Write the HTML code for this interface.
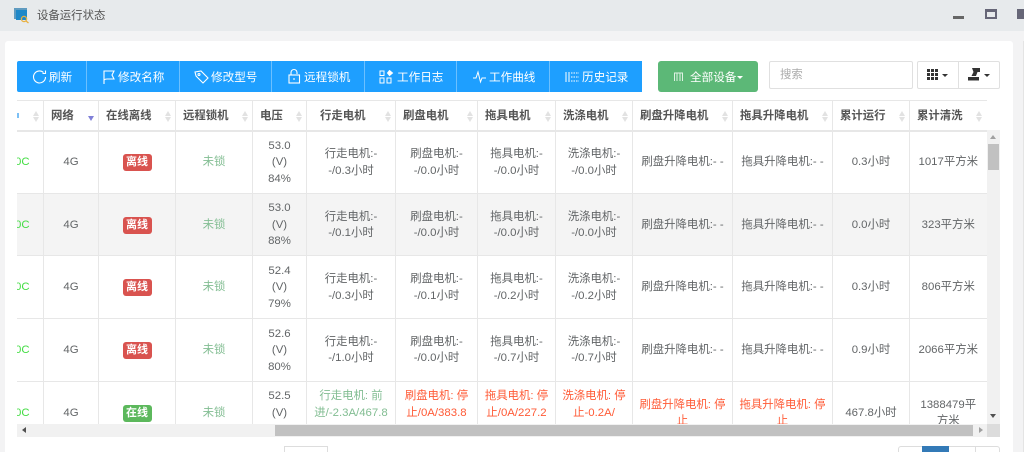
<!DOCTYPE html>
<html lang="zh"><head><meta charset="utf-8"><title>设备运行状态</title>
<style>
*{box-sizing:border-box}
html,body{margin:0;padding:0;width:1024px;height:452px;overflow:hidden}
body{background:#f3f3f4;font:11.4px/16.5px "Liberation Sans","Noto Sans CJK SC",sans-serif;color:#626567}
#root{position:absolute;left:0;top:0;width:1024px;height:452px;overflow:hidden;background:#f3f3f4;filter:blur(.3px)}
.a{position:absolute}
#top{left:0;top:0;width:1024px;height:31px;background:#e7eaec}
#panel{left:5px;top:41px;width:1008px;height:411px;background:#fff;border-radius:3px 3px 0 0}
#tb{left:17px;top:61px;width:625px;height:31px;background:#1e9fff;border-radius:2px 0 0 2px}
.sep{top:61px;width:1px;height:31px;background:#6cc0ff}
.tt{top:62px;line-height:31px;color:#fff;font-size:11.6px;white-space:nowrap}
.ic{position:absolute}
#wrap{left:17px;top:100px;width:970px;height:324px;overflow:hidden;background:#fff}
table{border-collapse:collapse;table-layout:fixed;width:970px}
th,td{border:1px solid #e7e7e7;padding:1px 0 0;text-align:center;overflow:hidden;vertical-align:middle;font-weight:400}
th{height:30px;border-bottom:2px solid #e7e7e7;text-align:left;padding-left:7px;font-weight:700;color:#555;white-space:nowrap;position:relative}
th:after{content:"";position:absolute;right:4.500px;top:10px;width:0;height:0;border:3.500px solid transparent;border-bottom:5px solid #e2e2e2;border-top:0}
th:before{content:"";position:absolute;right:4.500px;top:16px;width:0;height:0;border:3.500px solid transparent;border-top:5px solid #e2e2e2;border-bottom:0}
th.s:before{border-top-color:#8080d8;top:15px}
th.s:after{display:none}
td{height:62.7px}
tr.g td{background:#f4f4f4}
td:first-child{border-left:0;text-align:left;color:#44dd44;white-space:nowrap}
td:first-child span{margin-left:-2px}
th:first-child{border-left:0;padding-left:0}
.b{display:inline-block;width:29px;height:17px;line-height:17px;border-radius:3px;color:#fff;font-size:11px;font-weight:700;background:#d9534f;vertical-align:middle}
.on{background:#5cb85c}
.l{color:#82bd92}
.r{color:#ff5a36}
.btn{border:1px solid #e0e0e0;background:#fff}
.car{position:absolute;width:0;height:0;border:3px solid transparent;border-top:3px solid #333;border-bottom:0}
</style></head><body>
<div id="root">
<div class="a" id="top"></div>
<svg class="a" style="left:13px;top:7px" width="18" height="17" viewBox="0 0 18 17"><rect x="1" y="1" width="13" height="11" fill="#5f9bc0"/><rect x="3" y="3" width="11" height="10" fill="#1e88c8"/><circle cx="11" cy="12" r="2.600" fill="none" stroke="#e8b040" stroke-width="1.300"/><path d="M13 14l2.500 2" stroke="#e8b040" stroke-width="1.300"/></svg>
<div class="a" style="left:37px;top:8px;color:#555;line-height:17px">设备运行状态</div>
<div class="a" style="left:953px;top:16px;width:11px;height:3px;background:#666"></div>
<div class="a" style="left:985px;top:9px;width:12px;height:10px;border:2px solid #667;border-top-width:3px"></div>
<div class="a" style="left:1017px;top:9px;width:7px;height:10px;background:#667"></div>
<div class="a" id="panel"></div>
<div class="a" style="left:1023px;top:41px;width:1px;height:411px;background:#e4e4e4"></div>

<div class="a" id="tb"></div>
<div class="a sep" style="left:86px"></div><div class="a sep" style="left:179px"></div><div class="a sep" style="left:271px"></div><div class="a sep" style="left:364px"></div><div class="a sep" style="left:456px"></div><div class="a sep" style="left:549px"></div>
<svg class="ic" style="left:32px;top:69px" width="16" height="16" viewBox="0 0 16 16" fill="none" stroke="#fff" stroke-width="1.100"><path d="M13.500 8a6 6 0 1 1-2-4.500"/><path d="M13.500 1.500v3h-3"/></svg>
<div class="a tt" style="left:49px">刷新</div>
<svg class="ic" style="left:102px;top:69px" width="14" height="16" viewBox="0 0 14 16" fill="none" stroke="#fff" stroke-width="1.100"><path d="M2 15V2h10l-2 4 2 4H5c-1 0-2 0-3 1"/></svg>
<div class="a tt" style="left:118px">修改名称</div>
<svg class="ic" style="left:193px;top:69px" width="17" height="16" viewBox="0 0 17 16" fill="none" stroke="#fff" stroke-width="1.100"><path d="M2 3l6-1 7 7-5 5-7-7z"/><circle cx="6" cy="5.500" r="1"/></svg>
<div class="a tt" style="left:211px">修改型号</div>
<svg class="ic" style="left:287px;top:68px" width="14" height="16" viewBox="0 0 14 16" fill="none" stroke="#fff" stroke-width="1.100"><rect x="2" y="7" width="10.500" height="8"/><path d="M4 7V4.500a3 3 0 0 1 6 0V6"/><path d="M7 10v2"/></svg>
<div class="a tt" style="left:304px">远程锁机</div>
<svg class="ic" style="left:379px;top:70px" width="16" height="14" viewBox="0 0 16 14" fill="none" stroke="#fff" stroke-width="1"><rect x="1" y="1" width="4" height="4.500"/><rect x="1" y="8" width="4" height="5"/><rect x="8" y="8" width="4" height="5"/><path d="M10.500 .5l3 2.500-3 2.500-2-2.500z" fill="#fff"/></svg>
<div class="a tt" style="left:397px">工作日志</div>
<svg class="ic" style="left:472px;top:70px" width="16" height="14" viewBox="0 0 16 14" fill="none" stroke="#fff" stroke-width="1"><path d="M1 8h3l2-6 2.500 10 1.500-4h4"/></svg>
<div class="a tt" style="left:489px">工作曲线</div>
<svg class="ic" style="left:565px;top:70px" width="15" height="14" viewBox="0 0 15 14" stroke="#fff" stroke-width="1" fill="none"><path d="M1 2v10M4 2v10"/><path d="M6 3h8M6 7h8M6 11h8" stroke-dasharray="1.500 1"/></svg>
<div class="a tt" style="left:582px">历史记录</div>

<div class="a" style="left:658px;top:61px;width:100px;height:31px;background:#5cb877;border-radius:3px"></div>
<svg class="ic" style="left:673px;top:71px" width="11" height="11" viewBox="0 0 11 11" fill="none" stroke="#dff2e4" stroke-width="1"><path d="M1.500 10V2h8v8M4 2v8M7 2v8"/></svg>
<div class="a tt" style="left:690px">全部设备</div>
<div class="a" style="left:737px;top:76px;width:0;height:0;border:3px solid transparent;border-top:3px solid #fff;border-bottom:0"></div>

<div class="a btn" style="left:769px;top:61px;width:144px;height:28px;border-radius:2px;line-height:27px;padding-left:10px;color:#aaa">搜索</div>
<div class="a btn" style="left:917px;top:61px;width:42px;height:28px;border-radius:2px 0 0 2px"></div>
<div class="a btn" style="left:958px;top:61px;width:42px;height:28px;border-radius:0 2px 2px 0"></div>
<svg class="ic" style="left:927px;top:69px" width="11" height="11" viewBox="0 0 11 11" fill="#333"><path d="M0 0h3v3H0zM4 0h3v3H4zM8 0h3v3H8zM0 4h3v3H0zM4 4h3v3H4zM8 4h3v3H8zM0 8h3v3H0zM4 8h3v3H4zM8 8h3v3H8z"/></svg>
<div class="car" style="left:942px;top:74px"></div>
<svg class="ic" style="left:968px;top:67px" width="13" height="14" viewBox="0 0 13 14" fill="#333"><path d="M0 10h11v3.500H0z"/><path d="M4 1h8v4H9.500L8 9H3.500l2-4z"/></svg>
<div class="car" style="left:984px;top:74px"></div>

<div class="a" id="wrap"><table>
<colgroup><col style="width:26.500px"><col style="width:55px"><col style="width:77px"><col style="width:77px"><col style="width:54px"><col style="width:89px"><col style="width:82px"><col style="width:78px"><col style="width:77px"><col style="width:100px"><col style="width:100px"><col style="width:77px"><col style="width:77.500px"></colgroup>
<tr><th>&nbsp;</th><th class="s">网络</th><th>在线离线</th><th>远程锁机</th><th>电压</th><th style="padding-left:13px">行走电机</th><th>刷盘电机</th><th>拖具电机</th><th>洗涤电机</th><th>刷盘升降电机</th><th>拖具升降电机</th><th>累计运行</th><th>累计清洗</th></tr>
<tr><td><span>0C</span></td><td>4G</td><td><span class="b">离线</span></td><td class="l">未锁</td><td>53.0<br>(V)<br>84%</td><td>行走电机:-<br>-/0.3小时</td><td>刷盘电机:-<br>-/0.0小时</td><td>拖具电机:-<br>-/0.0小时</td><td>洗涤电机:-<br>-/0.0小时</td><td>刷盘升降电机:- -</td><td>拖具升降电机:- -</td><td>0.3小时</td><td>1017平方米</td></tr>
<tr class="g"><td><span>0C</span></td><td>4G</td><td><span class="b">离线</span></td><td class="l">未锁</td><td>53.0<br>(V)<br>88%</td><td>行走电机:-<br>-/0.1小时</td><td>刷盘电机:-<br>-/0.0小时</td><td>拖具电机:-<br>-/0.0小时</td><td>洗涤电机:-<br>-/0.0小时</td><td>刷盘升降电机:- -</td><td>拖具升降电机:- -</td><td>0.0小时</td><td>323平方米</td></tr>
<tr><td><span>0C</span></td><td>4G</td><td><span class="b">离线</span></td><td class="l">未锁</td><td>52.4<br>(V)<br>79%</td><td>行走电机:-<br>-/0.3小时</td><td>刷盘电机:-<br>-/0.1小时</td><td>拖具电机:-<br>-/0.2小时</td><td>洗涤电机:-<br>-/0.2小时</td><td>刷盘升降电机:- -</td><td>拖具升降电机:- -</td><td>0.3小时</td><td>806平方米</td></tr>
<tr><td><span>0C</span></td><td>4G</td><td><span class="b">离线</span></td><td class="l">未锁</td><td>52.6<br>(V)<br>80%</td><td>行走电机:-<br>-/1.0小时</td><td>刷盘电机:-<br>-/0.0小时</td><td>拖具电机:-<br>-/0.7小时</td><td>洗涤电机:-<br>-/0.7小时</td><td>刷盘升降电机:- -</td><td>拖具升降电机:- -</td><td>0.9小时</td><td>2066平方米</td></tr>
<tr><td><span>0C</span></td><td>4G</td><td><span class="b on">在线</span></td><td class="l">未锁</td><td>52.5<br>(V)<br>&nbsp;</td><td class="l">行走电机: 前<br>进/-2.3A/467.8<br>&nbsp;</td><td class="r">刷盘电机: 停<br>止/0A/383.8<br>&nbsp;</td><td class="r">拖具电机: 停<br>止/0A/227.2<br>&nbsp;</td><td class="r">洗涤电机: 停<br>止-0.2A/<br>&nbsp;</td><td class="r">刷盘升降电机: 停<br>止</td><td class="r">拖具升降电机: 停<br>止</td><td>467.8小时</td><td>1388479平<br>方米</td></tr>
</table></div>
<div class="a" style="left:17px;top:113px;width:1.500px;height:5px;background:#7cc0f5"></div>

<div class="a" style="left:987px;top:100px;width:13px;height:30px;background:#fff"></div>
<div class="a" style="left:987px;top:130px;width:13px;height:294px;background:#f1f1f1"></div>
<div class="a" style="left:988px;top:144px;width:11px;height:26px;background:#c1c1c1"></div>
<div class="a" style="left:990px;top:135px;width:0;height:0;border:3.500px solid transparent;border-bottom:4px solid #a0a0a0;border-top:0"></div>
<div class="a" style="left:990px;top:414px;width:0;height:0;border:3.500px solid transparent;border-top:4px solid #505050;border-bottom:0"></div>
<div class="a" style="left:17px;top:424px;width:970px;height:13px;background:#f1f1f1"></div>
<div class="a" style="left:275px;top:425px;width:698px;height:11px;background:#c1c1c1"></div>
<div class="a" style="left:22px;top:427px;width:0;height:0;border:3.500px solid transparent;border-right:4px solid #505050;border-left:0"></div>
<div class="a" style="left:979px;top:427px;width:0;height:0;border:3.500px solid transparent;border-left:4px solid #a0a0a0;border-right:0"></div>
<div class="a" style="left:987px;top:424px;width:13px;height:13px;background:#dcdcdc"></div>

<div class="a" style="left:284px;top:446px;width:44px;height:20px;border:1px solid #ddd;background:#fff"></div>
<div class="a" style="left:898px;top:446px;width:102px;height:20px;border:1px solid #ddd;background:#fff;border-radius:3px"></div>
<div class="a" style="left:922px;top:446px;width:27px;height:6px;background:#337ab7"></div>
<div class="a" style="left:975px;top:446px;width:1px;height:6px;background:#ddd"></div>
</div>
</body></html>
